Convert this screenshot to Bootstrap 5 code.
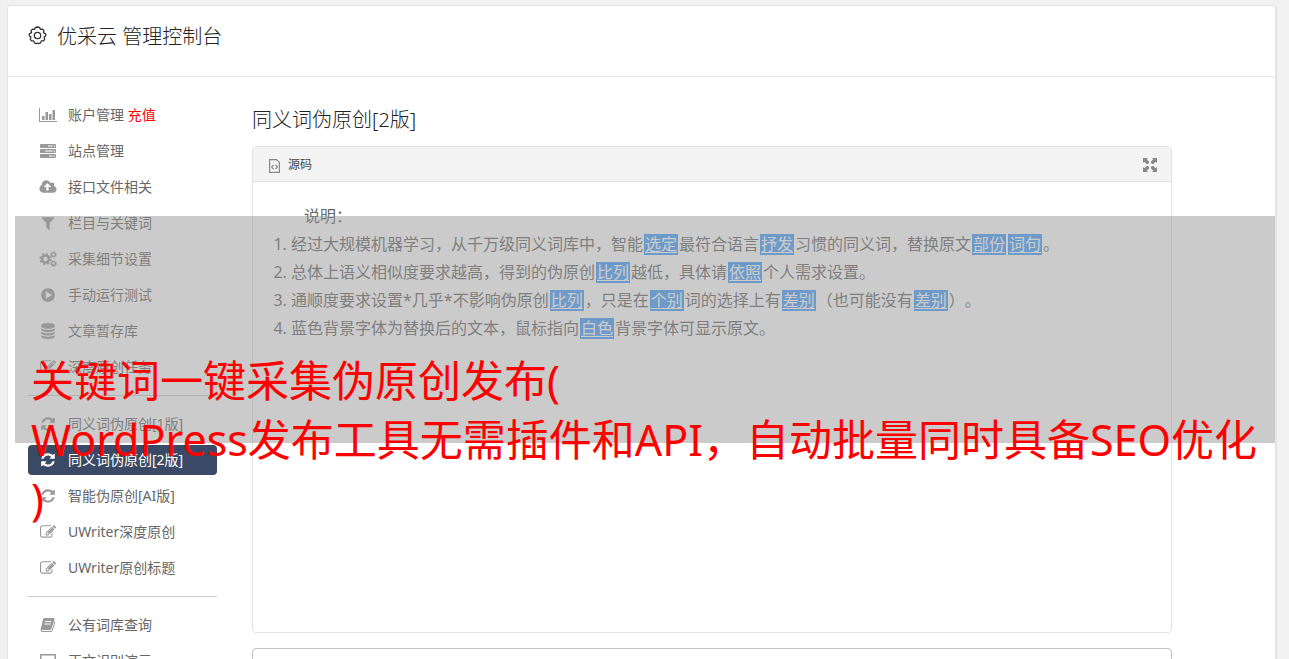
<!DOCTYPE html>
<html lang="zh-CN">
<head>
<meta charset="utf-8">
<meta name="viewport" content="width=device-width, initial-scale=1">
<title>优采云 管理控制台</title>
<link href="https://cdn.jsdelivr.net/npm/bootstrap@5.3.0/dist/css/bootstrap.min.css" rel="stylesheet">
<style>
  body { background: #f1f1f1; color: #333; font-family: "Noto Sans", "Noto Sans CJK SC", sans-serif; font-size: 14px; text-spacing-trim: space-all; }
  .console { margin: 5px 12px 0 7px; border: 1px solid #e4e4e4; border-right-width: 2px; border-radius: 4px; min-height: 100vh; }
  .console-head { height: 71px; padding: 0 20px 11px; border-bottom: 1px solid #e4e4e4; gap: 10px; }
  .console-title, .page-title { font-size: 20px; line-height: 30px; font-weight: 300; color: #222; }
  .console-title { padding-top: 3px; }
  .sidebar { width: 189px; margin-left: 20px; padding-top: 23px; }
  .sidebar .nav-link { height: 30px; margin-bottom: 6px; padding: 0 10px; gap: 10px; border-radius: 4px; color: #666; line-height: 30px; white-space: nowrap; }
  .sidebar .nav-link svg { width: 20px; height: 16px; flex: none; fill: #999; color: #999; overflow: visible; }
  .sidebar .nav-link.active { background: #3a4a66; color: #fff; }
  .sidebar .nav-link.active svg { fill: #fff; }
  .sidebar hr { margin: 7px 0 13px; border-color: #ccc; opacity: 1; }
  .recharge { color: #f00; }
  .workspace { margin: 28px 103px 0 35px; }
  .page-title { margin-bottom: 11px; }
  .source-panel { border: 1px solid #e3e3e3; border-radius: 4px; height: 487px; margin-bottom: 15px; }
  .source-head { height: 35px; padding: 2px 14px 0 16px; background: #f4f4f4; border-bottom: 1px solid #e3e3e3; border-radius: 3px 3px 0 0; font-size: 12px; line-height: 16px; color: #444; }
  .source-body { padding: 20px 16px; font-size: 16px; line-height: 28px; color: #666; }
  .source-body .lead-line { padding-left: 35px; }
  .source-body ol { padding-left: 22px; }
  .swap { background: #459dfb; color: #fff; padding: 0 1px; margin: 0 1px; display: inline-block; height: 21px; line-height: 21px; vertical-align: baseline; text-decoration: underline; text-underline-offset: 2px; text-decoration-skip-ink: none; text-decoration-thickness: 1px; }
  .result-box { border: 1px solid #c4c4c4; border-radius: 4px; height: 160px; resize: none; }
  .caption-band { top: 216px; left: 15px; right: 14px; height: 227px; padding: 135px 0 0 16px; background: rgba(151,151,151,.5); color: #f00; font-size: 43px; line-height: 59px; white-space: nowrap; pointer-events: none; }
</style>
</head>
<body class="vh-100 overflow-hidden position-relative">
<svg class="d-none" aria-hidden="true">
  <symbol id="i-refresh" viewBox="0 0 1792 1792"><path d="M1639 1056q0 5-1 7-64 268-268 434.500t-478 166.500q-146 0-282.500-55t-243.500-157l-129 129q-19 19-45 19t-45-19-19-45v-448q0-26 19-45t45-19h448q26 0 45 19t19 45-19 45l-137 137q71 66 161 102t187 36q134 0 250-65t186-179q11-17 53-117 8-23 30-23h192q13 0 22.500 9.500t9.500 22.500zm25-800v448q0 26-19 45t-45 19h-448q-26 0-45-19t-19-45 19-45l138-138q-148-137-349-137-134 0-250 65t-186 179q-11 17-53 117-8 23-30 23h-199q-13 0-22.500-9.500t-9.500-22.500v-7q65-268 270-434.500t480-166.500q146 0 284 55.500t245 156.500l130-129q19-19 45-19t45 19 19 45z"/></symbol>
  <symbol id="i-edit" viewBox="0 0 1792 1792"><path d="M888 1184l116-116-152-152-116 116v56h96v96h56zm440-720q-16-16-33 1l-350 350q-17 17-1 33t33-1l350-350q17-17 1-33zm80 594v190q0 119-84.500 203.500t-203.500 84.500h-832q-119 0-203.500-84.500t-84.500-203.500v-832q0-119 84.500-203.500t203.500-84.500h832q63 0 117 25 15 7 18 23 3 17-9 29l-49 49q-14 14-32 8-23-6-45-6h-832q-66 0-113 47t-47 113v832q0 66 47 113t113 47h832q66 0 113-47t47-113v-126q0-13 9-22l64-64q15-15 35-7t20 29zm-96-738l288 288-672 672h-288v-288zm444 132l-92 92-288-288 92-92q28-28 68-28t68 28l152 152q28 28 28 68t-28 68z"/></symbol>
</svg>

<div class="console bg-white">
  <header class="console-head d-flex align-items-center">
    <svg width="19" height="19" viewBox="0 0 19 19" fill="none" stroke="#333" stroke-width="1.300" stroke-linejoin="round" aria-hidden="true"><path d="M9.500 1l2 .4.9 1.900 2.200-.2 1.300 1.500-.4 2.100 2.100 1.100.2 1.900-1.700 1.400.6 2.200-1.200 1.500-2.200.1-.7 2-1.900.8-1.200-.7-1.200.7-1.900-.8-.7-2-2.200-.1-1.200-1.500.6-2.200-1.700-1.400.2-1.900 2.100-1.100-.4-2.100 1.300-1.500 2.200.2.9-1.900z"/><circle cx="9.500" cy="9.500" r="3.200"/></svg>
    <h1 class="console-title m-0">优采云 管理控制台</h1>
  </header>

  <div class="d-flex align-items-start">
    <nav class="sidebar nav flex-column flex-nowrap flex-shrink-0" aria-label="管理菜单">
      <a class="nav-link d-flex align-items-center" href="#"><svg viewBox="0 0 20 16"><path d="M1 1h1v13h17v1H1zM4 9h2.500v4H4zM7.500 5H10v8H7.500zM11 7h2.500v6H11zM14.500 3H17v10h-2.500z"/></svg><span>账户管理 <span class="recharge">充值</span></span></a>
      <a class="nav-link d-flex align-items-center" href="#"><svg viewBox="0 0 20 16"><g fill="#ccc" stroke="#999"><path d="M2.500 1.500h15v3h-15zM2.500 6.500h15v3h-15zM2.500 11.500h15v3h-15z"/></g><path d="M2 2h8v2H2zM2 7h5v2H2zM2 12h9v2H2zM14 2.500h2v1h-2zM14 7.500h2v1h-2zM14 12.500h2v1h-2z"/></svg>站点管理</a>
      <a class="nav-link d-flex align-items-center" href="#"><svg viewBox="-64 0 1920 1792"><path d="M1216 864q0-14-9-23l-352-352q-9-9-23-9t-23 9l-351 351q-10 12-10 24 0 14 9 23t23 9h224v352q0 13 9.500 22.500t22.500 9.500h192q13 0 22.500-9.500t9.500-22.500v-352h224q13 0 22.500-9.500t9.500-22.500zm640 288q0 159-112.500 271.500t-271.500 112.500h-1088q-185 0-316.500-131.500t-131.500-316.500q0-130 70-240t188-165q-2-30-2-43 0-212 150-362t362-150q156 0 285.500 87t188.500 231q71-62 166-62 106 0 181 75t75 181q0 76-41 138 130 31 213.500 135.500t83.500 238.500z"/></svg>接口文件相关</a>
      <a class="nav-link d-flex align-items-center" href="#"><svg viewBox="0 0 1792 1792"><path d="M1595 295q17 41-14 70l-493 493v742q0 42-39 59-13 5-25 5-27 0-45-19l-256-256q-19-19-19-45v-486l-493-493q-31-29-14-70 17-39 59-39h1280q42 0 59 39z"/></svg>栏目与关键词</a>
      <a class="nav-link d-flex align-items-center" href="#"><svg viewBox="0 0 20 16"><g fill="none" stroke="#999"><circle cx="7.500" cy="8" r="3.500" stroke-width="2.600"/><circle cx="7.500" cy="8" r="5.300" stroke-width="1.600" stroke-dasharray="2.100 2.060"/><circle cx="15.500" cy="3.500" r="1.900" stroke-width="1.300"/><circle cx="15.500" cy="3.500" r="2.800" stroke-dasharray="1.200 1"/><circle cx="15.500" cy="12.500" r="1.900" stroke-width="1.300"/><circle cx="15.500" cy="12.500" r="2.800" stroke-dasharray="1.200 1"/></g></svg>采集细节设置</a>
      <a class="nav-link d-flex align-items-center" href="#"><svg viewBox="0 0 1792 1792"><path d="M896 128q209 0 385.500 103t279.500 279.500 103 385.500-103 385.500-279.500 279.500-385.500 103-385.500-103-279.500-279.500-103-385.500 103-385.500 279.500-279.500 385.500-103zm384 823q32-18 32-55t-32-55l-544-320q-31-19-64-1-32 19-32 56v640q0 37 32 56 16 8 32 8 17 0 32-9z"/></svg>手动运行测试</a>
      <a class="nav-link d-flex align-items-center" href="#"><svg viewBox="0 0 1792 1792"><path d="M896 768q237 0 443-43t325-127v170q0 69-103 128t-280 93.500-385 34.500-385-34.500-280-93.500-103-128v-170q119 84 325 127t443 43zm0 768q237 0 443-43t325-127v170q0 69-103 128t-280 93.500-385 34.500-385-34.500-280-93.500-103-128v-170q119 84 325 127t443 43zm0-384q237 0 443-43t325-127v170q0 69-103 128t-280 93.500-385 34.500-385-34.500-280-93.500-103-128v-170q119 84 325 127t443 43zm0-1152q208 0 385 34.500t280 93.500 103 128v128q0 69-103 128t-280 93.500-385 34.500-385-34.500-280-93.500-103-128v-128q0-69 103-128t280-93.500 385-34.500z"/></svg>文章暂存库</a>
      <a class="nav-link d-flex align-items-center" href="#"><svg><use href="#i-edit"/></svg>深度原创任务</a>
      <hr>
      <a class="nav-link d-flex align-items-center" href="#"><svg><use href="#i-refresh"/></svg>同义词伪原创[1版]</a>
      <a class="nav-link active d-flex align-items-center" href="#" aria-current="page"><svg><use href="#i-refresh"/></svg>同义词伪原创[2版]</a>
      <a class="nav-link d-flex align-items-center" href="#"><svg><use href="#i-refresh"/></svg>智能伪原创[AI版]</a>
      <a class="nav-link d-flex align-items-center" href="#"><svg><use href="#i-edit"/></svg>UWriter深度原创</a>
      <a class="nav-link d-flex align-items-center" href="#"><svg><use href="#i-edit"/></svg>UWriter原创标题</a>
      <hr>
      <a class="nav-link d-flex align-items-center" href="#"><svg viewBox="0 0 20 16"><path fill-rule="evenodd" d="M6.500 1h9q1.500 0 1 1.500l-3 9q-.4 1.500-2 1.500H4.500q-.9 0-.8.5.1.500.9.5h8q.9 0 1.200-.9L16.700 4q.9.500.5 1.600l-2.700 8.100Q14 15 12.600 15H4.500Q3 15 2.700 13.500q-.2-.9.100-1.700L5 2.500Q5.300 1 6.500 1zM7.300 4l-.3 1h6.200l.3-1zM6.600 6.500l-.3 1h6.200l.3-1z"/></svg>公有词库查询</a>
      <a class="nav-link d-flex align-items-center" href="#"><svg viewBox="0 0 20 16"><path fill-rule="evenodd" d="M3 1h14q1 0 1 1v9q0 1-1 1h-5l1 3H7l1-3H3q-1 0-1-1V2q0-1 1-1zm.500 1.500v7.500h13V2.500z"/></svg>正文识别演示</a>
    </nav>

    <main class="workspace flex-grow-1">
      <h2 class="page-title">同义词伪原创[2版]</h2>
      <section class="source-panel">
        <div class="source-head d-flex align-items-center justify-content-between">
          <span class="d-flex align-items-end gap-2"><svg width="11" height="14" viewBox="0 0 11 14" fill="none" stroke="#888" stroke-width="1.200" aria-hidden="true"><path d="M.6.6h7l2.800 2.800v10H.6zM4.500 5.800L2.600 8l1.900 2.200M6.500 5.800L8.400 8l-1.900 2.200"/></svg>源码</span>
          <button type="button" class="btn p-0 border-0 d-flex" aria-label="全屏"><svg width="14" height="14" viewBox="0 0 14 14" fill="#888"><path id="arr" d="M0 0h5L3.700 1.300 6 3.600v1.400L5 6H3.600L1.300 3.700 0 5z"/><use href="#arr" transform="rotate(90 7 7)"/><use href="#arr" transform="rotate(180 7 7)"/><use href="#arr" transform="rotate(270 7 7)"/></svg></button>
        </div>
        <div class="source-body">
          <p class="lead-line m-0">说明：</p>
          <ol class="m-0">
            <li>经过大规模机器学习，从千万级同义词库中，智能<span class="swap">选定</span>最符合语言<span class="swap">抒发</span>习惯的同义词，替换原文<span class="swap">部份</span><span class="swap">词句</span>。</li>
            <li>总体上语义相似度要求越高，得到的伪原创<span class="swap">比列</span>越低，具体请<span class="swap">依照</span>个人需求设置。</li>
            <li>通顺度要求设置*几乎*不影响伪原创<span class="swap">比列</span>，只是在<span class="swap">个别</span>词的选择上有<span class="swap">差别</span>（也可能没有<span class="swap">差别</span>）。</li>
            <li>蓝色背景字体为替换后的文本，鼠标指向<span class="swap">白色</span>背景字体可显示原文。</li>
          </ol>
        </div>
      </section>
      <textarea class="result-box d-block w-100" aria-label="结果"></textarea>
    </main>
  </div>
</div>

<div class="caption-band position-absolute">关键词一键采集伪原创发布(<br>WordPress发布工具无需插件和API，自动批量同时具备SEO优化<br>)</div>

<script src="https://cdn.jsdelivr.net/npm/bootstrap@5.3.0/dist/js/bootstrap.bundle.min.js"></script>
</body>
</html>
